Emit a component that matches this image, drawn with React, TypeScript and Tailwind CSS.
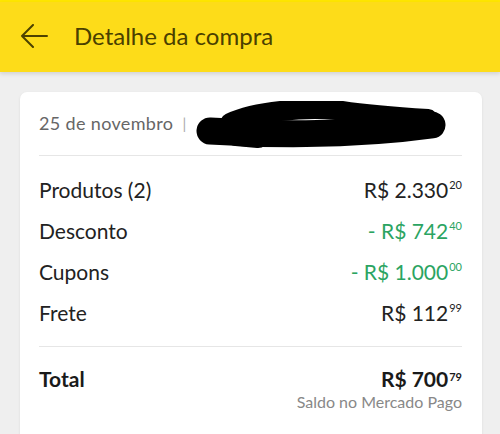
import React from "react";

const font = { fontFamily: "Lato, 'Open Sans', sans-serif" };

function Money({ value, cents, className = "", bold = false }: { value: string; cents: string; className?: string; bold?: boolean }) {
  return (
    <span className={`flex items-start ${className}`}>
      <span className={bold ? "font-bold" : ""}>{value}</span>
      <span className={`text-[11px] leading-none mt-[5px] ml-[1px] ${bold ? "font-bold" : ""}`}>{cents}</span>
    </span>
  );
}

export default function App() {
  return (
    <div className="w-[500px] h-[434px] bg-[#efefef] overflow-hidden" style={font}>
      <div className="h-[2px] bg-[#ffe600]" />
      <header className="h-[70px] bg-[#fddc19] flex items-center pl-[20px] shadow-[0_2px_4px_rgba(0,0,0,0.12)] relative z-10">
        <svg width="28" height="24" viewBox="0 0 28 24" className="mt-[-2px]">
          <path d="M27 12 H2 M13 1 L2 12 L13 23" fill="none" stroke="#4d4200" strokeWidth="2" strokeLinecap="round" strokeLinejoin="round" />
        </svg>
        <h1 className="ml-[26px] text-[24px] text-[#4a4000] leading-none mt-[-2px]">Detalhe da compra</h1>
      </header>
      <main className="pl-[20px] pr-[18px] pt-[20px]">
        <div className="bg-white rounded-[7px] shadow-[0_1px_3px_rgba(0,0,0,0.08)] pl-[19px] pr-[20px] pb-[40px]">
          <div className="h-[63px] flex items-center text-[18px] tracking-[0.35px] text-[#666] relative">
            <span>25 de novembro</span>
            <span className="ml-[9px] text-[#aaa] text-[15px]">|</span>
            <svg width="252" height="48" viewBox="0 0 252 48" className="absolute left-[157px] top-[9px]">
              <g fill="none" stroke="#000" strokeLinecap="round" strokeLinejoin="round">
                <path d="M14 30 C 60 33, 150 36, 236 24" strokeWidth="27" />
                <path d="M34 22 C 60 10, 110 6, 140 9 C 170 14, 200 16, 232 18" strokeWidth="20" />
                <path d="M40 34 L 62 36" strokeWidth="22" />
              </g>
            </svg>
          </div>
          <div className="h-px bg-[#e6e6e6]" />
          <div className="pt-[13px] pb-[13px] text-[21px] text-[#222]">
            <div className="h-[41px] flex items-center justify-between">
              <span>Produtos (2)</span>
              <Money value="R$ 2.330" cents="20" />
            </div>
            <div className="h-[41px] flex items-center justify-between">
              <span>Desconto</span>
              <Money value="- R$ 742" cents="40" className="text-[#2ba462]" />
            </div>
            <div className="h-[41px] flex items-center justify-between">
              <span>Cupons</span>
              <Money value="- R$ 1.000" cents="00" className="text-[#2ba462]" />
            </div>
            <div className="h-[41px] flex items-center justify-between">
              <span>Frete</span>
              <Money value="R$ 112" cents="99" />
            </div>
          </div>
          <div className="h-px bg-[#e6e6e6]" />
          <div className="pt-[19px] flex justify-between text-[#1a1a1a]">
            <span className="text-[21px] font-bold leading-[26px]">Total</span>
            <div className="flex flex-col items-end">
              <Money value="R$ 700" cents="79" bold className="text-[21px] leading-[26px]" />
              <span className="text-[16px] text-[#888] leading-[20px] mt-[0px]">Saldo no Mercado Pago</span>
            </div>
          </div>
        </div>
      </main>
    </div>
  );
}
